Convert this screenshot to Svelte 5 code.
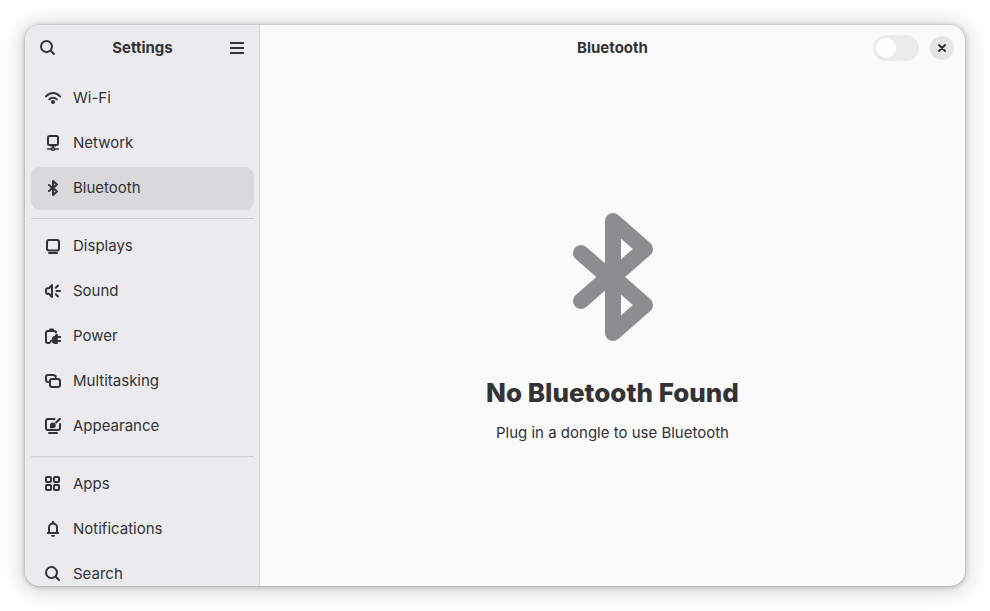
<script>
  const groups = [
    [
      { id: 'wifi', label: 'Wi-Fi' },
      { id: 'network', label: 'Network' },
      { id: 'bluetooth', label: 'Bluetooth' }
    ],
    [
      { id: 'displays', label: 'Displays' },
      { id: 'sound', label: 'Sound' },
      { id: 'power', label: 'Power' },
      { id: 'multitasking', label: 'Multitasking' },
      { id: 'appearance', label: 'Appearance' }
    ],
    [
      { id: 'apps', label: 'Apps' },
      { id: 'notifications', label: 'Notifications' },
      { id: 'search', label: 'Search' }
    ]
  ]

  let selected = $state('bluetooth')
  let enabled = $state(false)

  function select(e, id) {
    e.preventDefault()
    selected = id
  }
</script>

{#snippet icon(name)}
  <svg class="icon" viewBox="0 0 16 16" aria-hidden="true">
    {#if name === 'wifi'}
      <path d="M1 6.4C5 2 11 2 15 6.4" />
      <path d="M4.2 9.4c2.2-2.2 5.4-2.2 7.6 0" />
      <circle class="solid" cx="8" cy="12" r="2" />
    {:else if name === 'network'}
      <rect x="3" y="1" width="10" height="9" rx="1.5" />
      <path class="solid" d="M5 10h6v1.500H9V12l2 2-2 2H7l-2-2 2-2v-.5H5z" />
      <path class="thin" d="M2.700 14H6M10 14h3.300" />
      <circle class="hole" cx="8" cy="14" r=".7" />
    {:else if name === 'bluetooth'}
      <path d="M4 5l4 3.5M4 11l4-3.5M8 1v14l4-3.5L8 8l4-3.5z" />
    {:else if name === 'displays'}
      <rect x="2" y="2" width="12" height="10.500" rx="2" />
      <path d="M4 15h8" />
    {:else if name === 'sound'}
      <path d="M7 2v12l-3-3.200H2.500C1.600 10.800 1 10 1 9V7c0-1 .6-1.800 1.500-1.800H4z" />
      <path d="M10.800 4.700L13 2.500M11.500 8H15M10.800 11.300L13 13.500" />
    {:else if name === 'power'}
      <path d="M4.500 15H3c-1.200 0-2-.8-2-2V5c0-1.200.8-2 2-2h6c1.200 0 2 .7 2 1.500" />
      <path d="M5 1.500h3" />
      <path class="solid" d="M12.800 6v10H10c-1.500 0-2.600-.9-3-2.200-.6 0-1 .4-1 1.200H4.500c0-2 .8-3.200 2.300-3.200C7 9.500 8 8.200 9.500 8L11 6z" />
      <path d="M12 9h3.200M12 13h3.200" />
    {:else if name === 'multitasking'}
      <path d="M3.500 9C2 9 1 8.300 1 7V4c0-1.200.8-2 2-2h5c1.400 0 2.600.8 2.800 2" />
      <rect x="5" y="6" width="10" height="8" rx="2" />
    {:else if name === 'appearance'}
      <path d="M9.500 1H3c-1.200 0-2 .8-2 2v7c0 1.200.8 2 2 2h10c1.200 0 2-.8 2-2V6" />
      <path d="M4 15h8M11.200 4.500L15 .8" />
      <path class="solid" d="M5 10.300V7.500a2.900 2.900 0 0 1 5.800 0c0 1.700-1.200 2.800-2.900 2.800z" />
    {:else if name === 'apps'}
      <rect x="1" y="1" width="5" height="5" rx="1" />
      <rect x="9" y="1" width="5" height="5" rx="1" />
      <rect x="1" y="9" width="5" height="5" rx="1" />
      <rect x="9" y="9" width="5" height="5" rx="1" />
    {:else if name === 'notifications'}
      <path d="M8 .6V2" />
      <path d="M2.800 12h10.400M4 12V6.500a4 4 0 0 1 8 0V12" />
      <path class="solid" d="M6 14h4c0 1.200-.9 2-2 2s-2-.8-2-2z" />
    {:else if name === 'search'}
      <circle cx="6.5" cy="6.5" r="5.5" />
      <path d="M10.800 10.800L14 14" />
    {:else if name === 'menu'}
      <path class="square" d="M1 3h14M1 8h14M1 13h14" />
    {:else if name === 'close'}
      <path d="M5 5l6 6M11 5l-6 6" />
    {/if}
  </svg>
{/snippet}

<div class="desktop">
  <div class="window">
    <aside class="sidebar">
      <header>
        <button class="flat" aria-label="Search settings">{@render icon('search')}</button>
        <h2>Settings</h2>
        <button class="flat" aria-label="Main menu">{@render icon('menu')}</button>
      </header>
      <nav>
        {#each groups as group, i}
          {#if i > 0}<hr />{/if}
          <ul>
            {#each group as item}
              <li>
                <a
                  href="#{item.id}"
                  class:active={selected === item.id}
                  aria-current={selected === item.id ? 'page' : undefined}
                  onclick={(e) => select(e, item.id)}
                >
                  {@render icon(item.id)}
                  <span>{item.label}</span>
                </a>
              </li>
            {/each}
          </ul>
        {/each}
      </nav>
    </aside>

    <main>
      <header>
        <h2>Bluetooth</h2>
        <div class="controls">
          <input type="checkbox" role="switch" class="switch" aria-label="Bluetooth" bind:checked={enabled} disabled />
          <button class="close" aria-label="Close">{@render icon('close')}</button>
        </div>
      </header>
      <section class="status">
        {@render icon('bluetooth')}
        <h1>No Bluetooth Found</h1>
        <p>Plug in a dongle to use Bluetooth</p>
      </section>
    </main>
  </div>
</div>

<style>
  :global(body) { background: #fff; }
  .desktop { box-sizing: border-box; height: 100vh; padding: 25px; font-family: Inter, 'Noto Sans', sans-serif; font-size: 15px; line-height: 18px; color: #323237; }
  .window { display: flex; height: 100%; border-radius: 15px; overflow: hidden; background: #fafafb; box-shadow: 0 0 0 1px rgba(0, 0, 0, 0.06), 0 1px 5px 1px rgba(0, 0, 0, 0.18), 0 2px 20px 5px rgba(0, 0, 0, 0.14); }
  h1, h2, p, ul { margin: 0; padding: 0; }
  h2 { font-size: 15px; font-weight: 700; text-align: center; }
  button { padding: 0; border: none; color: inherit; cursor: pointer; }

  .icon { display: block; flex: none; width: 16px; height: 16px; fill: none; stroke: currentColor; stroke-width: 2; stroke-linecap: round; stroke-linejoin: round; }
  .icon .solid { fill: currentColor; stroke: none; }
  .icon .hole { fill: #ebebed; stroke: none; }
  .icon .thin { stroke-width: 1.5; }
  .icon .square { stroke-linecap: butt; }

  .sidebar { display: flex; flex-direction: column; flex: none; width: 234px; border-right: 1px solid #d9d9db; background: #ebebed; }
  header { box-sizing: border-box; flex: none; height: 46px; display: grid; align-items: center; }
  .sidebar header { grid-template-columns: 34px 1fr 34px; padding: 0 5px 0 6px; }
  .flat { display: flex; align-items: center; justify-content: center; height: 34px; background: none; border-radius: 9px; }
  .flat:hover { background: #dedee0; }

  nav { flex: 1; min-height: 0; overflow-y: auto; scrollbar-width: none; padding: 6px 5px 6px 6px; }
  ul { display: flex; flex-direction: column; gap: 2px; list-style: none; }
  hr { height: 1px; margin: 8px 0 6px; border: none; background: #cfcfd1; }
  nav a { display: flex; gap: 12px; height: 16px; padding: 13px 14px 14px; border-radius: 9px; color: inherit; text-decoration: none; }
  nav a span { line-height: 16px; }
  nav a:hover { background: #e2e2e4; }
  nav a.active { background: #d9d9db; }

  main { flex: 1; min-width: 0; display: flex; flex-direction: column; }
  main header { grid-template-columns: 1fr auto 1fr; padding: 0 11px; }
  main header h2 { grid-column: 2; }
  .controls { display: flex; align-items: center; justify-content: flex-end; gap: 11px; }
  .switch { appearance: none; box-sizing: border-box; display: flex; width: 46px; height: 26px; margin: 0; padding: 3px; border-radius: 13px; background: #ebebec; }
  .switch::before { content: ''; width: 20px; height: 20px; border-radius: 50%; background: #fdfdfe; }
  .switch:checked { justify-content: flex-end; background: #3584e4; }
  .close { display: flex; align-items: center; justify-content: center; width: 24px; height: 24px; border-radius: 50%; background: #e6e6e7; }
  .close:hover { background: #dadadc; }

  .status { flex: 1; display: flex; flex-direction: column; align-items: center; justify-content: center; text-align: center; }
  .status .icon { width: 128px; height: 128px; margin-bottom: 36px; color: #8d8d8f; }
  h1 { margin-bottom: 13px; font-size: 26px; line-height: 32px; font-weight: 800; }
  .status p { line-height: 22px; }
</style>
